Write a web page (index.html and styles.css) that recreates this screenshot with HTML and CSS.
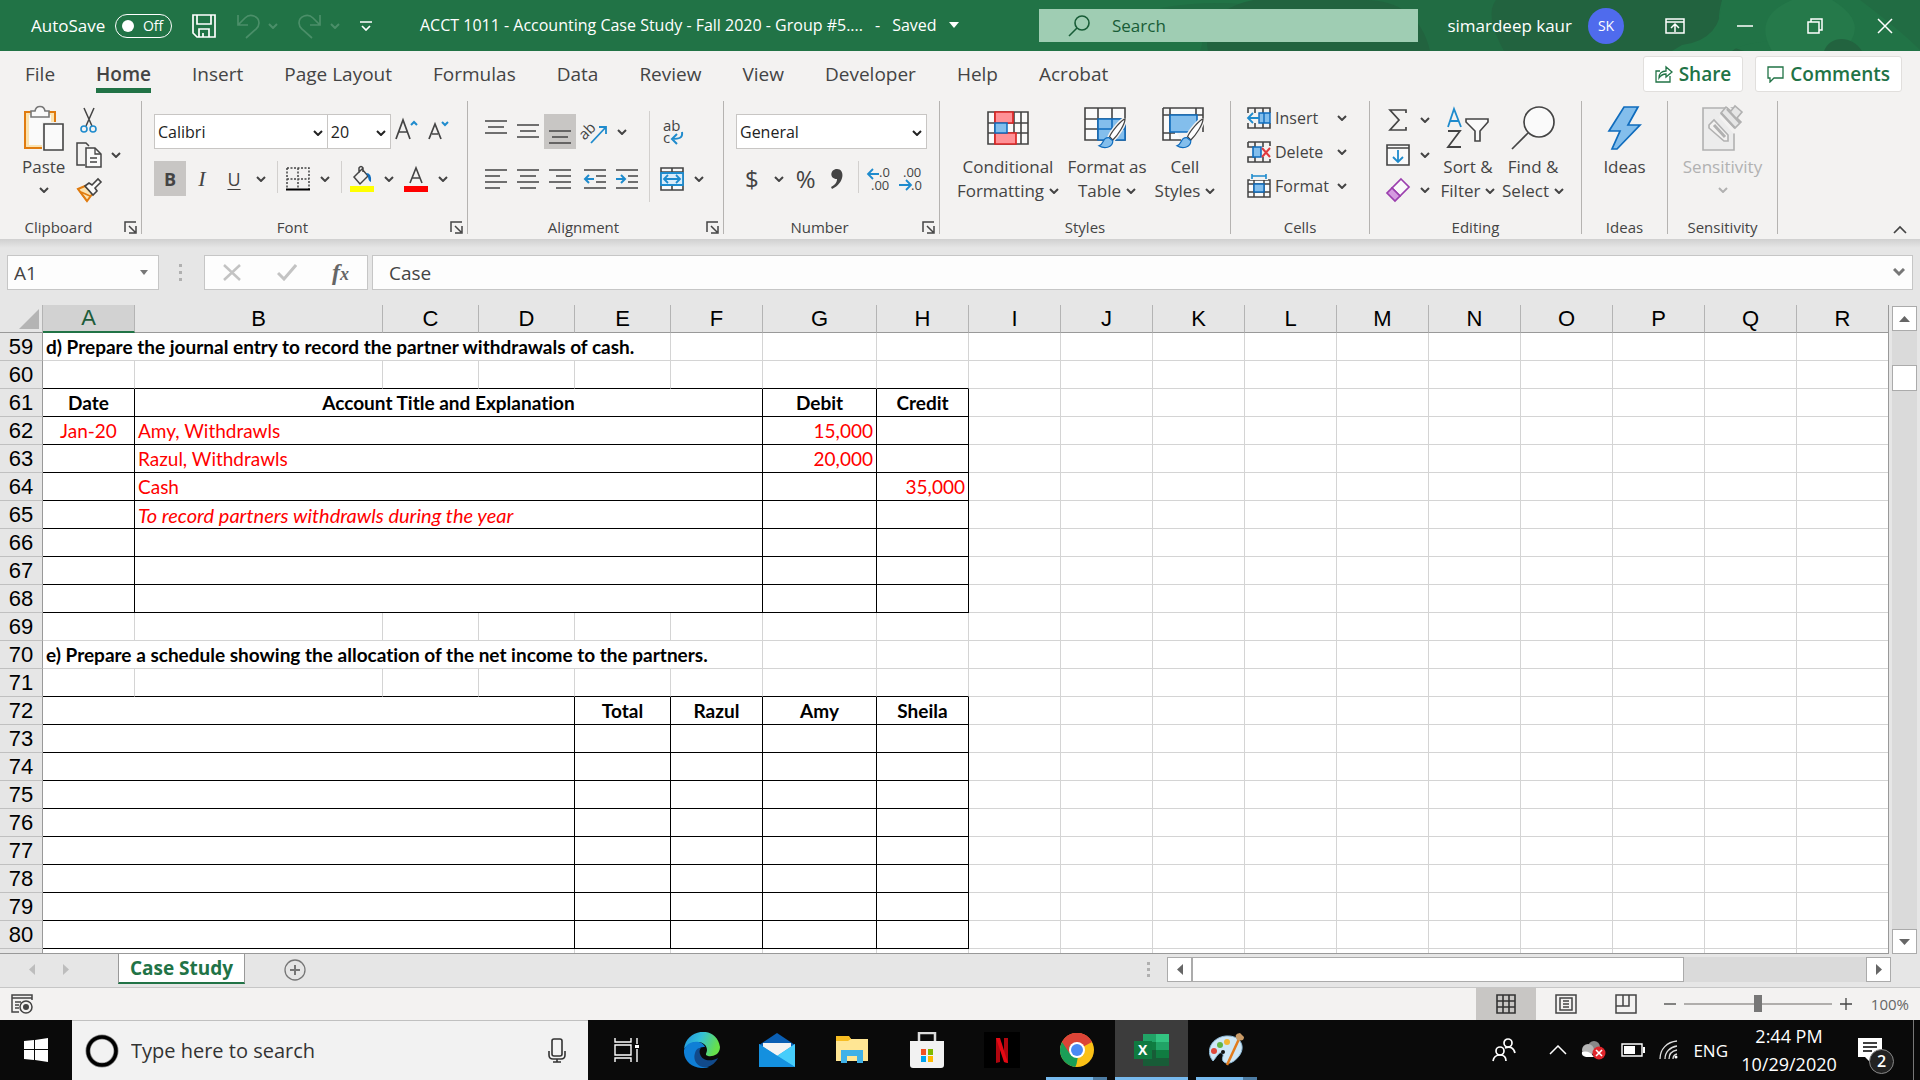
FILE: index.html
```html
<!DOCTYPE html>
<html lang="en">
<head>
  <meta charset="UTF-8" />
  <meta name="viewport" content="width=device-width, initial-scale=1" />
  <title>ACCT 1011 - Accounting Case Study - Fall 2020 - Excel</title>
  <link rel="stylesheet" href="styles.css">
</head>
<body>

<!-- Shared icons -->
<svg class="defs" width="0" height="0" aria-hidden="true">
  <symbol id="chev" viewBox="0 0 10 6"><path d="M1 1l4 4 4-4" fill="none" stroke="currentColor" stroke-width="2"/></symbol>
  <symbol id="launch" viewBox="0 0 13 13"><path d="M1 11V1h11M5 5l6 6M12 5v7H5" fill="none" stroke="currentColor" stroke-width="1.5"/></symbol>
  <symbol id="brush" viewBox="0 0 34 38">
    <path d="M33 1C29 2 17 16 14 23l4 4C24 21 33 8 33 1z" fill="#fff" stroke="#f3f2f1" stroke-width="5"/>
    <path d="M33 1C29 2 17 16 14 23l4 4C24 21 33 8 33 1z" fill="#fff" stroke="#444" stroke-width="1.5"/>
    <path d="M13 24c-8-1-5 8-12 10 6 4 17 3 17-6z" fill="#83beec" stroke="#0f6cbd" stroke-width="1.5"/>
  </symbol>
</svg>

<header class="titlebar">
  <svg class="titlebar-art" viewBox="0 0 760 51" preserveAspectRatio="xMaxYMin slice" aria-hidden="true">
    <path d="M0 8q60-10 110 0v43H40q8-20-10-40z" fill="#216c43"/>
    <path d="M48 51q-6-32 24-44q24-12 60-7h430q-12 42 22 51z" fill="#22633f"/>
    <path d="M204 0q54 0 66 51h74q-20-36-8-51z" fill="#216c43"/>
    <path d="M562 0q0 40-40 45l-10 6h60q10-8 40-10v-41z" fill="#217346"/>
    <path d="M612 51q-20-34 20-51h40q40 24 10 51z" fill="#25794a"/>
    <path d="M664 51c6-16 28-16 38 0z" fill="#22633f"/>
    <path d="M700 0h60v50q-20-20-60-50z" fill="#216c43"/>
  </svg>
  <div class="quick">
    <label class="autosave">AutoSave
      <input type="checkbox" class="sr" name="autosave">
      <span class="toggle"><i></i>Off</span>
    </label>
    <button class="quick-btn" aria-label="Save"><svg width="24" height="24" viewBox="0 0 24 24"><path d="M1 1h22v22H5l-4-4zM5 1v9h14V1M7 23v-8h10v8M11 19v4" fill="none" stroke="#fff" stroke-width="1.7"/></svg></button>
    <button class="quick-btn dim" aria-label="Undo"><svg width="24" height="26" viewBox="0 0 24 26"><path d="M2 2v10h10M2 12L9 5c5-5 14-2 14 5 0 4-2 5-4 7l-9 8" fill="none" stroke="currentColor" stroke-width="1.7"/></svg><svg width="10" height="6"><use href="#chev"/></svg></button>
    <button class="quick-btn dim" aria-label="Redo"><svg width="24" height="26" viewBox="0 0 24 26"><path d="M22 2v10H12M22 12l-7-7C10 0 1 3 1 10c0 4 2 5 4 7l9 8" fill="none" stroke="currentColor" stroke-width="1.7"/></svg><svg width="10" height="6"><use href="#chev"/></svg></button>
    <button class="quick-btn" aria-label="Customize"><svg width="12" height="10" viewBox="0 0 12 10"><path d="M0 1h12M2 5l4 4 4-4" fill="none" stroke="#fff" stroke-width="1.7"/></svg></button>
  </div>
  <div class="doc-title">
    <span>ACCT 1011 - Accounting Case Study - Fall 2020 - Group #5....</span>
    <span>-</span>
    <span>Saved</span>
    <svg width="10" height="6" viewBox="0 0 10 6"><path d="M0 0h10L5 6z" fill="#fff"/></svg>
  </div>
  <label class="search">
    <svg width="22" height="22" viewBox="0 0 22 22"><path d="M1 21l8-8" stroke="#185c37" stroke-width="1.6"/><circle cx="14" cy="8" r="7" fill="none" stroke="#185c37" stroke-width="1.6"/></svg>
    <input type="text" placeholder="Search" aria-label="Search">
  </label>
  <div class="window-side">
    <span class="user">simardeep kaur</span>
    <span class="avatar">SK</span>
    <button class="win-btn" aria-label="Ribbon display options"><svg width="20" height="16" viewBox="0 0 20 16"><path d="M1 1h18v14H1zM1 4h18M10 14V6M6 10l4-4 4 4" fill="none" stroke="#fff" stroke-width="1.5"/></svg></button>
    <button class="win-btn" aria-label="Minimize"><svg width="16" height="16" viewBox="0 0 16 16"><path d="M0 8h16" stroke="#fff" stroke-width="1.5"/></svg></button>
    <button class="win-btn" aria-label="Restore"><svg width="16" height="16" viewBox="0 0 16 16"><path d="M1 4h11v11H1zM4 4V1h11v11h-3" fill="none" stroke="#fff" stroke-width="1.5"/></svg></button>
    <button class="win-btn" aria-label="Close"><svg width="16" height="16" viewBox="0 0 16 16"><path d="M1 1l14 14M15 1L1 15" stroke="#fff" stroke-width="1.5"/></svg></button>
  </div>
</header>

<nav class="tabs">
  <a href="#">File</a>
  <a href="#" class="active">Home</a>
  <a href="#">Insert</a>
  <a href="#">Page Layout</a>
  <a href="#">Formulas</a>
  <a href="#">Data</a>
  <a href="#">Review</a>
  <a href="#">View</a>
  <a href="#">Developer</a>
  <a href="#">Help</a>
  <a href="#">Acrobat</a>
  <div class="tab-actions">
    <button><svg width="18" height="18" viewBox="0 0 18 18"><path d="M5 6H1v11h14v-6M4 13c0-5 3-7 7-7V2l6 5-6 5V9c-3 0-5 1-7 4z" fill="none" stroke="#217346" stroke-width="1.3"/></svg>Share</button>
    <button><svg width="17" height="17" viewBox="0 0 17 17"><path d="M1 1h15v11H7l-4 4v-4H1z" fill="none" stroke="#217346" stroke-width="1.3"/></svg>Comments</button>
  </div>
</nav>

<section class="ribbon">
  <div class="group g-clipboard">
    <div class="group-body">
      <button class="big"><span class="big-icon"><svg width="42" height="46" viewBox="0 0 42 46"><path d="M2 7h30v36H2z" fill="#fbe3b0" stroke="#e07c10" stroke-width="2"/><path d="M6 10h22v30H6z" fill="#fafafa"/><path d="M8 12V6h4c1-6 9-6 10 0h4v6z" fill="#fafafa" stroke="#777" stroke-width="1.6"/><path d="M19 17h22v28H19z" fill="#f3f2f1"/><path d="M21 19h19v26H21z" fill="#fafafa" stroke="#444" stroke-width="1.6"/></svg></span>Paste<svg class="below" width="10" height="6"><use href="#chev"/></svg></button>
      <div class="stack">
        <button class="tool" aria-label="Cut"><svg width="18" height="26" viewBox="0 0 18 26"><path d="M4 1l8 18M14 1L6 19" stroke="#444" stroke-width="1.5"/><circle cx="4" cy="22" r="3" fill="none" stroke="#1e8bcd" stroke-width="1.6"/><circle cx="13" cy="22" r="3" fill="none" stroke="#1e8bcd" stroke-width="1.6"/></svg></button>
        <div class="row"><button class="tool" aria-label="Copy"><svg width="26" height="26" viewBox="0 0 26 26"><path d="M9 23H1V1h9l3 3" fill="none" stroke="#444" stroke-width="1.5"/><path d="M10 6h9l6 6v13H10z" fill="#fafafa" stroke="#444" stroke-width="1.5"/><path d="M19 6v6h6M14 16h7M14 20h7" fill="none" stroke="#444" stroke-width="1.3"/></svg></button><button class="drop" aria-label="Copy options"><svg width="10" height="6"><use href="#chev"/></svg></button></div>
        <button class="tool" aria-label="Format Painter"><svg width="26" height="24" viewBox="0 0 26 24"><path d="M2 11l7-3 8 7-6 8z" fill="#fbe3b0" stroke="#e07c10" stroke-width="2"/><path d="M5 14l9 4M2 11l9 12" stroke="#e07c10" stroke-width="1.5"/><path d="M9 8l4-3 3 2 6-6 3 3-6 6 2 3-4 4z" fill="#fafafa" stroke="#444" stroke-width="1.6"/></svg></button>
      </div>
    </div>
    <div class="group-label launchable">Clipboard<button class="launch" aria-label="Clipboard settings"><svg width="13" height="13"><use href="#launch"/></svg></button></div>
  </div>

  <div class="group g-font">
    <div class="group-body tools">
      <div class="row">
        <span class="combo w-font"><select aria-label="Font"><option>Calibri</option></select><svg width="10" height="6"><use href="#chev"/></svg></span>
        <span class="combo w-size"><select aria-label="Font size"><option>20</option></select><svg width="10" height="6"><use href="#chev"/></svg></span>
        <button class="tool" aria-label="Increase font size"><svg width="24" height="26" viewBox="0 0 24 26"><path d="M1 20L8 1l7 19M4 13h8" fill="none" stroke="#444" stroke-width="1.7"/><path d="M16 6l3-3 3 3" fill="none" stroke="#1e8bcd" stroke-width="2"/></svg></button>
        <button class="tool" aria-label="Decrease font size"><svg width="22" height="26" viewBox="0 0 22 26"><path d="M1 20L7 5l6 15M4 15h6" fill="none" stroke="#444" stroke-width="1.7"/><path d="M14 3l3 3 3-3" fill="none" stroke="#1e8bcd" stroke-width="2"/></svg></button>
      </div>
      <div class="row">
        <button class="tool on bold">B</button>
        <button class="tool italic">I</button>
        <button class="tool under">U</button>
        <button class="drop" aria-label="Underline options"><svg width="10" height="6"><use href="#chev"/></svg></button>
        <i class="sep"></i>
        <button class="tool" aria-label="Borders"><svg width="24" height="24" viewBox="0 0 24 24"><path d="M1 1h22v21M1 1v21M12 1v21M1 12h22" fill="none" stroke="#444" stroke-width="1.5" stroke-dasharray="2 1.5"/><path d="M0 22.5h24" stroke="#000" stroke-width="2"/></svg></button>
        <button class="drop" aria-label="Border options"><svg width="10" height="6"><use href="#chev"/></svg></button>
        <i class="sep"></i>
        <button class="tool" aria-label="Fill color"><svg width="24" height="26" viewBox="0 0 24 26"><path d="M4 11l8-8 6 7-8 8zM9 7V2q2-3 4 0v4" fill="none" stroke="#444" stroke-width="1.5"/><path d="M16 7q6 0 5 9-3-1-3-6z" fill="#0f6cbd"/><path d="M0 20h24v6H0z" fill="#ff0"/></svg></button>
        <button class="drop" aria-label="Fill options"><svg width="10" height="6"><use href="#chev"/></svg></button>
        <button class="tool" aria-label="Font color"><svg width="24" height="26" viewBox="0 0 24 26"><path d="M6 17l6-15 6 15M8 12h8" fill="none" stroke="#444" stroke-width="1.6"/><path d="M0 20h24v6H0z" fill="#f00"/></svg></button>
        <button class="drop" aria-label="Font color options"><svg width="10" height="6"><use href="#chev"/></svg></button>
      </div>
    </div>
    <div class="group-label launchable">Font<button class="launch" aria-label="Font settings"><svg width="13" height="13"><use href="#launch"/></svg></button></div>
  </div>

  <div class="group g-align">
    <div class="group-body">
      <div class="tools">
        <div class="row">
          <button class="tool" aria-label="Top align"><svg width="22" height="24" viewBox="0 0 22 24"><path d="M0 1h22M3 7h16M0 13h22" stroke="#444" stroke-width="1.7"/></svg></button>
          <button class="tool" aria-label="Middle align"><svg width="22" height="24" viewBox="0 0 22 24"><path d="M0 5h22M3 11h16M0 17h22" stroke="#444" stroke-width="1.7"/></svg></button>
          <button class="tool on" aria-label="Bottom align"><svg width="22" height="24" viewBox="0 0 22 24"><path d="M0 11h22M3 17h16M0 23h22" stroke="#444" stroke-width="1.7"/></svg></button>
          <button class="tool second" aria-label="Orientation"><svg width="26" height="26" viewBox="0 0 26 26"><text x="-2" y="17" transform="rotate(-45 6 14)" font-size="15" fill="#444">ab</text><path d="M9 24L24 8M17 8h7v7" fill="none" stroke="#1e8bcd" stroke-width="1.8"/></svg></button>
          <button class="drop" aria-label="Orientation options"><svg width="10" height="6"><use href="#chev"/></svg></button>
        </div>
        <div class="row">
          <button class="tool" aria-label="Align left"><svg width="22" height="20" viewBox="0 0 22 20"><path d="M0 1h22M0 7h15M0 13h22M0 19h15" stroke="#444" stroke-width="1.7"/></svg></button>
          <button class="tool" aria-label="Center"><svg width="22" height="20" viewBox="0 0 22 20"><path d="M0 1h22M3 7h16M0 13h22M3 19h16" stroke="#444" stroke-width="1.7"/></svg></button>
          <button class="tool" aria-label="Align right"><svg width="22" height="20" viewBox="0 0 22 20"><path d="M0 1h22M7 7h15M0 13h22M7 19h15" stroke="#444" stroke-width="1.7"/></svg></button>
          <button class="tool second" aria-label="Decrease indent"><svg width="22" height="20" viewBox="0 0 22 20"><path d="M0 1h22M12 7h10M12 13h10M0 19h22" stroke="#444" stroke-width="1.7"/><path d="M10 10H1M5 6l-4 4 4 4" fill="none" stroke="#1e8bcd" stroke-width="2"/></svg></button>
          <button class="tool" aria-label="Increase indent"><svg width="22" height="20" viewBox="0 0 22 20"><path d="M0 1h22M12 7h10M12 13h10M0 19h22" stroke="#444" stroke-width="1.7"/><path d="M0 10h9M5 6l4 4-4 4" fill="none" stroke="#1e8bcd" stroke-width="2"/></svg></button>
        </div>
      </div>
      <i class="sep tall"></i>
      <div class="tools">
        <button class="tool" aria-label="Wrap text"><svg width="24" height="26" viewBox="0 0 24 26"><text x="3" y="12" font-size="15" fill="#444">ab</text><text x="3" y="24" font-size="15" fill="#444">c</text><path d="M22 13c1 6-3 7-10 7M17 15l-5 5 5 5" fill="none" stroke="#1e8bcd" stroke-width="2"/></svg></button>
        <div class="row">
          <button class="tool" aria-label="Merge and center"><svg width="24" height="24" viewBox="0 0 24 24"><path d="M1 1h22v22H1zM12 1v22M1 5h22" fill="#fafafa" stroke="#444" stroke-width="1.6"/><path d="M1 6h22v12H1z" fill="#d9ecfa" stroke="#1e8bcd" stroke-width="1.8"/><path d="M4 12h16M8 8l-4 4 4 4M16 8l4 4-4 4" fill="none" stroke="#1e8bcd" stroke-width="1.8"/></svg></button>
          <button class="drop" aria-label="Merge options"><svg width="10" height="6"><use href="#chev"/></svg></button>
        </div>
      </div>
    </div>
    <div class="group-label launchable">Alignment<button class="launch" aria-label="Alignment settings"><svg width="13" height="13"><use href="#launch"/></svg></button></div>
  </div>

  <div class="group g-number">
    <div class="group-body tools">
      <div class="row">
        <span class="combo w-format"><select aria-label="Number format"><option>General</option></select><svg width="10" height="6"><use href="#chev"/></svg></span>
      </div>
      <div class="row">
        <button class="tool glyph">$</button>
        <button class="drop" aria-label="Currency options"><svg width="10" height="6"><use href="#chev"/></svg></button>
        <button class="tool glyph">%</button>
        <button class="tool" aria-label="Comma style"><svg width="12" height="20" viewBox="0 0 12 20"><path d="M6 0c8 0 8 14-5 20l-1-2c5-3 6-5 6-8C-2 10-1 0 6 0z" fill="#444"/></svg></button>
        <i class="sep"></i>
        <button class="tool" aria-label="Increase decimal"><svg width="24" height="24" viewBox="0 0 24 24"><text x="12" y="10" font-size="13" fill="#444">.0</text><text x="4" y="23" font-size="13" fill="#444">.00</text><path d="M12 7H1M6 2L1 7l5 5" fill="none" stroke="#1e8bcd" stroke-width="1.8"/></svg></button>
        <button class="tool" aria-label="Decrease decimal"><svg width="24" height="24" viewBox="0 0 24 24"><text x="4" y="10" font-size="13" fill="#444">.00</text><text x="12" y="23" font-size="13" fill="#444">.0</text><path d="M0 18h12M7 13l5 5-5 5" fill="none" stroke="#1e8bcd" stroke-width="1.8"/></svg></button>
      </div>
    </div>
    <div class="group-label launchable">Number<button class="launch" aria-label="Number settings"><svg width="13" height="13"><use href="#launch"/></svg></button></div>
  </div>

  <div class="group g-styles">
    <div class="group-body">
      <button class="big w-cond"><span class="big-icon"><svg width="42" height="34" viewBox="0 0 42 34"><path d="M1 1h40v32H1zM1 12h40M1 22h40M8 1v32M34 1v32M27 1v32" fill="#fafafa" stroke="#444" stroke-width="1.6"/><path d="M8 1h18v11H8zM8 22h21v11H8z" fill="#ff9196" stroke="#dc2626" stroke-width="1.7"/><path d="M8 12h12v10H8z" fill="#83beec" stroke="#0f6cbd" stroke-width="1.5"/></svg></span>Conditional<span class="line">Formatting <svg width="10" height="6"><use href="#chev"/></svg></span></button>
      <button class="big w-table"><span class="big-icon"><svg width="46" height="42" viewBox="0 0 46 42"><path d="M1 1h40v32H1zM1 12h40M1 22h40M14 1v32M28 1v32" fill="#fafafa" stroke="#444" stroke-width="1.6"/><path d="M14 12h27v21H14zM14 22h27M28 12v21" fill="#83beec" stroke="#0f6cbd" stroke-width="1.6"/><use href="#brush" x="11" y="11" width="34" height="31"/></svg></span>Format as<span class="line">Table <svg width="10" height="6"><use href="#chev"/></svg></span></button>
      <button class="big w-cell"><span class="big-icon"><svg width="46" height="42" viewBox="0 0 46 42"><path d="M1 1h40v24M1 1v32h18M1 8h40M8 1v32M34 1v7M1 26h12" fill="#fafafa" stroke="#444" stroke-width="1.6"/><path d="M8 8h27v17H8z" fill="#83beec" stroke="#0f6cbd" stroke-width="1.6"/><use href="#brush" x="11" y="11" width="34" height="31"/></svg></span>Cell<span class="line">Styles <svg width="10" height="6"><use href="#chev"/></svg></span></button>
    </div>
    <div class="group-label">Styles</div>
  </div>

  <div class="group g-cells">
    <div class="group-body stack">
      <button class="text-tool"><svg width="24" height="22" viewBox="0 0 24 22"><path d="M1 6V1h22v5M1 16v5h22v-5M8 1v5M16 1v5M8 16v5M16 16v5" fill="none" stroke="#444" stroke-width="1.6"/><path d="M12 6h11v10H12zM17 6v10" fill="#83beec" stroke="#0f6cbd" stroke-width="1.4"/><path d="M12 11H1M6 6l-5 5 5 5" fill="none" stroke="#1e8bcd" stroke-width="1.8"/></svg>Insert<svg class="end" width="10" height="6"><use href="#chev"/></svg></button>
      <button class="text-tool"><svg width="24" height="22" viewBox="0 0 24 22"><path d="M1 1h22v4M1 1v5h6v10H1v5h22v-3M8 1v5M16 1v5M8 16v5M16 16v5" fill="none" stroke="#444" stroke-width="1.6"/><path d="M6 6h8v10H6z" fill="#83beec" stroke="#0f6cbd" stroke-width="1.6"/><path d="M15 7l8 9M23 7l-8 9" stroke="#e03a3e" stroke-width="2"/></svg>Delete<svg class="end" width="10" height="6"><use href="#chev"/></svg></button>
      <button class="text-tool"><svg width="24" height="24" viewBox="0 0 24 24"><path d="M1 6h22v17H1zM1 10h22M1 18h22M7 6v17M17 6v17" fill="#fafafa" stroke="#444" stroke-width="1.5"/><path d="M7 10h10v8H7z" fill="#83beec" stroke="#0f6cbd" stroke-width="1.5"/><path d="M3 0h18v6H3z" fill="#f3f2f1"/><path d="M5 0v5M19 0v5M5 2h14" stroke="#1e8bcd" stroke-width="1.6"/></svg>Format<svg class="end" width="10" height="6"><use href="#chev"/></svg></button>
    </div>
    <div class="group-label">Cells</div>
  </div>

  <div class="group g-editing">
    <div class="group-body">
      <div class="stack">
        <div class="row"><button class="tool" aria-label="Sum"><svg width="20" height="22" viewBox="0 0 20 22"><path d="M18 4V1H2l9 10L2 21h16v-3" fill="none" stroke="#444" stroke-width="1.7"/></svg></button><button class="drop" aria-label="Sum options"><svg width="10" height="6"><use href="#chev"/></svg></button></div>
        <div class="row"><button class="tool" aria-label="Fill"><svg width="24" height="22" viewBox="0 0 24 22"><path d="M1 1h22v20H1zM1 4h22" fill="#fafafa" stroke="#444" stroke-width="1.6"/><path d="M12 6v12M7 13l5 5 5-5" fill="none" stroke="#1e8bcd" stroke-width="1.8"/></svg></button><button class="drop" aria-label="Fill options"><svg width="10" height="6"><use href="#chev"/></svg></button></div>
        <div class="row"><button class="tool" aria-label="Clear"><svg width="24" height="24" viewBox="0 0 24 24"><path d="M15 1l8 8-9 9-8-8z" fill="#fafafa" stroke="#9b3fae" stroke-width="1.7"/><path d="M6 10l8 8-5 5-8-8z" fill="#d59be0" stroke="#9b3fae" stroke-width="1.7"/></svg></button><button class="drop" aria-label="Clear options"><svg width="10" height="6"><use href="#chev"/></svg></button></div>
      </div>
      <button class="big w-sort"><span class="big-icon"><svg width="42" height="42" viewBox="0 0 42 42"><path d="M1 20L7 2l7 18M3 14h9" fill="none" stroke="#1e8bcd" stroke-width="1.8"/><path d="M1 24h12L1 40h13" fill="none" stroke="#444" stroke-width="1.8"/><path d="M19 12h22v3l-8 9v10h-5V24l-9-9z" fill="#fafafa" stroke="#444" stroke-width="1.6"/></svg></span>Sort &amp;<span class="line">Filter <svg width="10" height="6"><use href="#chev"/></svg></span></button>
      <button class="big w-find"><span class="big-icon"><svg width="46" height="46" viewBox="0 0 46 46"><circle cx="29" cy="17" r="15" fill="#fafafa" stroke="#444" stroke-width="1.7"/><path d="M18 28L2 44" stroke="#444" stroke-width="1.7"/></svg></span>Find &amp;<span class="line">Select <svg width="10" height="6"><use href="#chev"/></svg></span></button>
    </div>
    <div class="group-label">Editing</div>
  </div>

  <div class="group g-ideas">
    <div class="group-body">
      <button class="big"><span class="big-icon"><svg width="34" height="44" viewBox="0 0 34 44"><path d="M16 1h14l-10 18h12L9 43H4l8-18H1z" fill="#83beec" stroke="#0f6cbd" stroke-width="1.7"/></svg></span>Ideas</button>
    </div>
    <div class="group-label">Ideas</div>
  </div>

  <div class="group g-sens">
    <div class="group-body">
      <button class="big" disabled><span class="big-icon"><svg width="42" height="46" viewBox="0 0 42 46"><path d="M1 3h31v42H1z" fill="#ececec" stroke="#b1b1b1" stroke-width="1.6"/><path d="M17 12l10-11 16 15-11 13z" fill="#f3f2f1"/><path d="M7 20l5-5 14 15v6h-4L7 23z" fill="#f3f2f1" stroke="#b1b1b1" stroke-width="1.6"/><path d="M12 20l11 12" stroke="#b1b1b1" stroke-width="3"/><path d="M19 8l5-6 5 4 4-5 7 6-5 6 4 4-6 6z" fill="#e6e6e6" stroke="#b1b1b1" stroke-width="1.6"/><path d="M19 8l14 15M25 4l13 14" stroke="#b1b1b1" stroke-width="2.5"/></svg></span>Sensitivity<svg class="below" width="10" height="6"><use href="#chev"/></svg></button>
    </div>
    <div class="group-label">Sensitivity</div>
  </div>

  <button class="collapse" aria-label="Collapse the ribbon"><svg width="14" height="9" viewBox="0 0 14 9"><path d="M1 8l6-6 6 6" fill="none" stroke="#444" stroke-width="1.7"/></svg></button>
</section>

<section class="formula-row">
  <div class="name-box"><input type="text" value="A1" aria-label="Name box"><svg width="8" height="5" viewBox="0 0 8 5"><path d="M0 0h8L4 5z" fill="#777"/></svg></div>
  <svg class="dots" width="3" height="17" viewBox="0 0 3 17"><path d="M0 0h3v3H0zM0 7h3v3H0zM0 14h3v3H0z" fill="#b0b0b0"/></svg>
  <div class="fx-box">
    <button aria-label="Cancel"><svg width="18" height="17" viewBox="0 0 18 17"><path d="M1 1l16 15M17 1L1 16" stroke="#c3c3c3" stroke-width="2.5"/></svg></button>
    <button aria-label="Enter"><svg width="20" height="17" viewBox="0 0 20 17"><path d="M1 9l6 6L19 1" fill="none" stroke="#c3c3c3" stroke-width="3"/></svg></button>
    <button class="fx">f<small>x</small></button>
  </div>
  <div class="formula"><input type="text" value="Case" aria-label="Formula bar"><svg width="12" height="9" viewBox="0 0 12 9"><path d="M1 1l5 5 5-5" fill="none" stroke="#777" stroke-width="3"/></svg></div>
</section>

<main class="sheet-area">
  <div class="sheet-view">
    <table class="sheet" id="sheet">
      <colgroup>
        <col class="c-head"><col><col class="c-b"><col class="c-c"><col class="c-c"><col class="c-c"><col><col class="c-g"><col>
        <col><col><col><col><col><col><col><col><col><col>
      </colgroup>
      <thead></thead>
      <tbody></tbody>
    </table>
  </div>
  <div class="vscroll">
    <button aria-label="Scroll up"><svg width="11" height="6" viewBox="0 0 11 6"><path d="M0 6h11L5.500 0z" fill="#666"/></svg></button>
    <div class="vtrack"><div class="vthumb"></div></div>
    <button aria-label="Scroll down"><svg width="11" height="6" viewBox="0 0 11 6"><path d="M0 0h11L5.500 6z" fill="#666"/></svg></button>
  </div>
</main>

<section class="sheet-bar">
  <div class="sheet-nav">
    <button aria-label="Previous sheet"><svg width="6" height="11" viewBox="0 0 6 11"><path d="M6 0v11L0 5.500z" fill="#bdbdbd"/></svg></button>
    <button aria-label="Next sheet"><svg width="6" height="11" viewBox="0 0 6 11"><path d="M0 0v11l6-5.500z" fill="#bdbdbd"/></svg></button>
  </div>
  <button class="sheet-tab">Case Study</button>
  <button class="add" aria-label="New sheet"><svg width="22" height="22" viewBox="0 0 22 22"><path d="M11 6v10M6 11h10" stroke="#777" stroke-width="2"/><circle cx="11" cy="11" r="10" fill="none" stroke="#777" stroke-width="1.3"/></svg></button>
  <svg class="dots" width="3" height="15" viewBox="0 0 3 15"><path d="M0 0h3v3H0zM0 6h3v3H0zM0 12h3v3H0z" fill="#b0b0b0"/></svg>
  <div class="hscroll">
    <button aria-label="Scroll left"><svg width="6" height="11" viewBox="0 0 6 11"><path d="M6 0v11L0 5.500z" fill="#666"/></svg></button>
    <div class="htrack"><div class="hthumb"></div></div>
    <button aria-label="Scroll right"><svg width="6" height="11" viewBox="0 0 6 11"><path d="M0 0v11l6-5.500z" fill="#666"/></svg></button>
  </div>
</section>

<section class="status">
  <button class="macro" aria-label="Record macro"><svg width="22" height="20" viewBox="0 0 22 20"><path d="M21 6V1H1v17h7M1 4h20M4 8h6M4 11h4M4 14h4" fill="none" stroke="#444" stroke-width="1.5"/><circle cx="15" cy="13" r="6" fill="#f3f2f1" stroke="#444" stroke-width="1.5"/><circle cx="15" cy="13" r="3" fill="#444"/></svg></button>
  <div class="views">
    <button class="on" aria-label="Normal view"><svg width="20" height="20" viewBox="0 0 20 20"><path d="M1 1h18v18H1zM1 7h18M1 13h18M7 1v18M13 1v18" fill="none" stroke="#333" stroke-width="1.6"/></svg></button>
    <button aria-label="Page layout view"><svg width="22" height="20" viewBox="0 0 22 20"><path d="M1 1h20v18H1zM5 4h12v12H5zM8 7h6M8 10h6M8 13h6" fill="none" stroke="#444" stroke-width="1.5"/></svg></button>
    <button aria-label="Page break view"><svg width="22" height="20" viewBox="0 0 22 20"><path d="M1 1h20v18H1zM1 12h13V1M8 1v11" fill="none" stroke="#444" stroke-width="1.5"/></svg></button>
  </div>
  <button class="zoom-step" aria-label="Zoom out"><svg width="12" height="12" viewBox="0 0 12 12"><path d="M0 6h12" stroke="#444" stroke-width="1.3"/></svg></button>
  <input type="range" min="0" max="100" value="50" aria-label="Zoom">
  <button class="zoom-step" aria-label="Zoom in"><svg width="12" height="12" viewBox="0 0 12 12"><path d="M0 6h12M6 0v12" stroke="#444" stroke-width="1.3"/></svg></button>
  <span class="zoom-val">100%</span>
</section>

<footer class="taskbar">
  <button class="start" aria-label="Start"><svg width="24" height="24" viewBox="0 0 24 24"><path d="M0 3l10-1v9H0zM11 2l13-2v11H11zM0 12h10v10L0 21zM11 12h13v12l-13-2z" fill="#fff"/></svg></button>
  <label class="task-search">
    <svg width="34" height="34" viewBox="0 0 34 34"><circle cx="17" cy="17" r="14" fill="none" stroke="#888" stroke-width="5"/><circle cx="17" cy="17" r="14" fill="none" stroke="#000" stroke-width="3.5"/></svg>
    <input type="text" placeholder="Type here to search" aria-label="Type here to search">
    <svg width="18" height="25" viewBox="0 0 18 25"><rect x="4" y="1" width="10" height="17" rx="2" fill="none" stroke="#333" stroke-width="1.6"/><path d="M1 13v4q0 4 4 4h8q4 0 4-4v-4M9 21v3M5 24h8" fill="none" stroke="#333" stroke-width="1.6"/></svg>
  </label>
  <div class="apps">
    <button aria-label="Task View"><svg width="26" height="24" viewBox="0 0 26 24"><path d="M1 0v4h16V0M1 24v-4h16v4M1 7h16v10H1zM23 0v6M23 11v13" fill="none" stroke="#fff" stroke-width="1.4"/><path d="M21 7h4v3h-4z" fill="#fff"/></svg></button>
    <button aria-label="Edge"><svg width="36" height="36" viewBox="0 0 36 36"><defs><linearGradient id="edgeA" x1="0" y1="0" x2="1" y2="0.3"><stop offset="0" stop-color="#1d8fe0"/><stop offset="0.5" stop-color="#35c1d6"/><stop offset="1" stop-color="#66e04a"/></linearGradient></defs><path d="M0 17C2-4 33-7 36 15c0 8-8 10-12 9-4-1-1-3-1-6 0-9-14-12-23-1z" fill="url(#edgeA)"/><path d="M0 18C3 8 18 7 21 15c-7-1-9 5-7 11 2 5 6 8 11 9C12 39-1 31 0 18z" fill="#0f7fd6"/><path d="M11 21c-3 9 5 16 12 14 5-1 9-5 11-9-7 4-16 3-18-4-1-3 0-5 1-6-4 0-5 2-6 5z" fill="#114a8b"/></svg></button>
    <button aria-label="Mail"><svg width="36" height="34" viewBox="0 0 36 34"><path d="M0 12L18 0l18 12v10H0z" fill="#0a5fb4"/><path d="M4 10h28v10L18 26 4 20z" fill="#f3f3f3"/><path d="M0 11l18 12 18-12v23H0z" fill="#1f9fe8"/><path d="M36 11v23L18 23z" fill="#46cdfb"/><path d="M0 11l36 23H0z" fill="#1490df"/></svg></button>
    <button aria-label="File Explorer"><svg width="32" height="28" viewBox="0 0 32 28"><path d="M0 1h13l2 2h17v22H0z" fill="#ffe694"/><path d="M0 0h13l2 3-3 2H0z" fill="#f7bd22"/><path d="M5 27V14h22v13h-6v-7H11v7z" fill="#3fb1e8"/></svg></button>
    <button aria-label="Store"><svg width="34" height="36" viewBox="0 0 34 36"><path d="M9 12V1h16v11" fill="none" stroke="#ddd" stroke-width="2.500"/><path d="M0 9h34v24q0 3-3 3H3q-3 0-3-3z" fill="#f2f2f2"/><path d="M11 17h5v6h-5z" fill="#f25022"/><path d="M18 17h5v6h-5z" fill="#7fba00"/><path d="M11 24h5v6h-5z" fill="#00a4ef"/><path d="M18 24h5v6h-5z" fill="#ffb900"/></svg></button>
    <button aria-label="Netflix"><svg width="36" height="36" viewBox="0 0 36 36"><path d="M0 0h36v36H0z" fill="#000"/><path d="M12 6h4v24l-4 1zM20 6h4v25l-4-1z" fill="#b1060f"/><path d="M12 6h4l8 25-4-1z" fill="#e50914"/></svg></button>
    <button class="open" aria-label="Chrome"><svg width="34" height="34" viewBox="0 0 34 34"><circle cx="17" cy="17" r="17" fill="#fbc116"/><path d="M17 17L2 9A17 17 0 0 1 32 9z" fill="#dc4437"/><path d="M17 17L15 34A17 17 0 0 1 2 9z" fill="#1a9e57"/><path d="M15 34l9-13-8-4-4 6z" fill="#1a9e57"/><path d="M16 34l9-14-6-2z" fill="#fbc116"/><path d="M2 9l8 12-1-8 8-4h15A17 17 0 0 0 2 9z" fill="#dc4437"/><circle cx="17" cy="17" r="8" fill="#fff"/><circle cx="17" cy="17" r="6" fill="#4a8af4"/></svg></button>
    <button class="open current" aria-label="Excel"><svg width="36" height="34" viewBox="0 0 36 34"><path d="M9 1h14v9H9z" fill="#21a366"/><path d="M22 1h13v9H22z" fill="#33c481"/><path d="M9 9h13v8H9z" fill="#107c41"/><path d="M22 9h13v8H22z" fill="#21a366"/><path d="M9 17h26v16H9z" fill="#185c37"/><path d="M22 17h13v8H22z" fill="#107c41"/><path d="M0 8h18v18H0z" fill="#0f7a40"/><text x="4" y="22" font-size="14" font-weight="700" fill="#fff">X</text></svg></button>
    <button class="open" aria-label="Paint"><svg width="36" height="34" viewBox="0 0 36 34"><path d="M17 3C32 2 37 14 30 23c-6 8-13 9-16 5-2-4 2-5-1-8-3-2-6 5-9 8C-5 17 4 4 17 3z" fill="#cfe7f7" stroke="#8ebbd8" stroke-width="1"/><circle cx="5" cy="18" r="3" fill="#e0483a"/><circle cx="11" cy="12" r="3" fill="#62b545"/><circle cx="18" cy="9" r="3" fill="#f2b632"/><circle cx="14" cy="19" r="2" fill="#111"/><path d="M30 6L18 32" stroke="#e27b1d" stroke-width="2.5"/><path d="M28 7q-4-6 3-7l4 4q0 5-7 3z" fill="#c99a66"/></svg></button>
  </div>
  <div class="tray">
    <button class="people" aria-label="People"><svg width="24" height="24" viewBox="0 0 24 24"><circle cx="8" cy="13" r="4" fill="none" stroke="#fff" stroke-width="1.7"/><circle cx="16" cy="5" r="4" fill="none" stroke="#fff" stroke-width="1.7"/><path d="M1 23q1-6 7-6t6 6M13 10q8-3 10 5" fill="none" stroke="#fff" stroke-width="1.7"/></svg></button>
    <button aria-label="Hidden icons"><svg width="18" height="10" viewBox="0 0 18 10"><path d="M1 9l8-8 8 8" fill="none" stroke="#fff" stroke-width="1.5"/></svg></button>
    <button aria-label="OneDrive"><svg width="26" height="20" viewBox="0 0 26 20"><circle cx="13" cy="7" r="6" fill="#888"/><circle cx="7" cy="10" r="6" fill="#b5b5b5"/><path d="M1 12q7-2 12 5H5q-5-1-4-5z" fill="#fff"/><circle cx="18" cy="13" r="6.500" fill="#e0252b"/><path d="M15 10l6 6M21 10l-6 6" stroke="#fff" stroke-width="1.6"/></svg></button>
    <button aria-label="Battery"><svg width="24" height="14" viewBox="0 0 24 14"><path d="M1 1h20v12H1z" fill="none" stroke="#fff" stroke-width="1.4"/><path d="M3 3h11v8H3zM22 4h2v6h-2z" fill="#fff"/></svg></button>
    <button aria-label="Wi-Fi"><svg width="20" height="20" viewBox="0 0 20 20"><path d="M1 19C1 9 8 2 18 1M6 19c0-7 5-12 12-13M10 19c0-5 3-8 8-9M14 19q0-4 4-5" fill="none" stroke="#ddd" stroke-width="1.3"/><circle cx="17" cy="17" r="1.500" fill="#fff"/></svg></button>
    <span class="lang">ENG</span>
    <div class="clock"><span>2:44 PM</span><span>10/29/2020</span></div>
    <button class="notif" aria-label="Notifications"><svg width="24" height="24" viewBox="0 0 24 24"><path d="M0 0h24v19H12v5l-5-5H0z" fill="#fff"/><path d="M5 5h14M5 9h14M5 13h9" stroke="#000" stroke-width="1.3"/></svg><span class="badge">2</span></button>
    <i class="desktop-edge"></i>
  </div>
</footer>

<script src="script.js"></script>
</body>
</html>
```
FILE: styles.css
```css
* {
  box-sizing: border-box;
}

body {
  margin: 0;
  height: 100vh;
  display: flex;
  flex-direction: column;
  overflow: hidden;
  background: #e6e6e6;
  color: #444;
  font-family: "Open Sans", "Noto Sans", sans-serif;
  font-size: 16px;
}

button {
  border: 0;
  padding: 0;
  background: none;
  color: inherit;
  font: inherit;
}

input, select {
  border: 0;
  padding: 0;
  background: none;
  font: inherit;
  color: inherit;
  outline: none;
  min-width: 0;
}

svg {
  display: block;
  flex: none;
}

.defs {
  position: absolute;
}

.sr {
  position: absolute;
  opacity: 0;
}

/* Title bar */
.titlebar {
  position: relative;
  display: grid;
  grid-template-columns: 420fr 619fr 379fr 502fr;
  align-items: center;
  height: 51px;
  flex: none;
  background: #217346;
  color: #fff;
}

.titlebar-art {
  position: absolute;
  right: 0;
  top: 0;
  width: 760px;
  height: 51px;
}

.quick {
  display: flex;
  align-items: center;
  gap: 20px;
  padding-left: 31px;
}

.autosave {
  display: flex;
  align-items: center;
  gap: 10px;
  font-size: 17px;
}

.toggle {
  display: flex;
  align-items: center;
  justify-content: space-between;
  width: 57px;
  height: 24px;
  padding: 0 8px 0 6px;
  border: 1px solid #fff;
  border-radius: 12px;
  font-size: 14px;
}

.toggle i {
  width: 12px;
  height: 12px;
  border-radius: 50%;
  background: #fff;
}

.quick-btn {
  display: flex;
  align-items: center;
  gap: 8px;
}

.quick-btn.dim {
  color: #4b8f69;
}

.doc-title {
  display: flex;
  align-items: center;
  gap: 12px;
  padding-bottom: 2px;
  white-space: nowrap;
}

.search {
  position: relative;
  display: flex;
  align-items: center;
  gap: 22px;
  height: 33px;
  padding-left: 29px;
  background: #9fcdb3;
  color: #185c37;
  font-size: 17px;
}

.search input::placeholder {
  color: #185c37;
  opacity: 1;
}

.window-side {
  position: relative;
  display: flex;
  align-items: center;
  justify-content: flex-end;
}

.user {
  font-size: 17px;
}

.avatar {
  width: 36px;
  height: 36px;
  margin: 0 16px;
  border-radius: 50%;
  background: #4f6bed;
  font-size: 14px;
  line-height: 36px;
  text-align: center;
}

.win-btn {
  display: flex;
  justify-content: center;
  width: 70px;
}

/* Tabs */
.tabs {
  display: flex;
  align-items: center;
  gap: 41px;
  height: 46px;
  flex: none;
  padding: 0 18px 0 25px;
  background: #f3f2f1;
  font-size: 19px;
}

.tabs a {
  color: #444;
  text-decoration: none;
  line-height: 28px;
  border-bottom: 5px solid transparent;
  border-top: 5px solid transparent;
}

.tabs a.active {
  border-bottom-color: #217346;
  font-weight: 600;
}

.tab-actions {
  display: flex;
  gap: 12px;
  margin-left: auto;
}

.tab-actions button {
  display: flex;
  align-items: center;
  gap: 6px;
  height: 36px;
  padding: 0 11px;
  background: #fff;
  border: 1px solid #e1dfdd;
  border-radius: 3px;
  color: #217346;
  font-weight: 600;
}

/* Ribbon */
.ribbon {
  display: flex;
  height: 142px;
  flex: none;
  padding: 4px 0 5px;
  background: #f3f2f1;
}

.ribbon text {
  font-family: "Open Sans", "Noto Sans", sans-serif;
}

.ribbon svg {
  overflow: visible;
}

.group {
  display: flex;
  flex-direction: column;
  flex: none;
  border-right: 1px solid #b5b3b1;
}

.g-clipboard { width: 142px; }
.g-font { width: 326px; }
.g-align { width: 256px; }
.g-number { width: 216px; }
.g-styles { width: 291px; }
.g-cells { width: 139px; }
.g-editing { width: 212px; }
.g-ideas { width: 86px; }
.g-sens { width: 110px; }

.group-body {
  display: flex;
  flex: 1;
  padding: 0 12px;
}

.group-label {
  position: relative;
  height: 16px;
  font-size: 15px;
  line-height: 18px;
  text-align: center;
}

.launchable {
  padding-right: 24px;
}

.launch {
  position: absolute;
  right: 4px;
  top: 3px;
}

.tools {
  display: flex;
  flex-direction: column;
  gap: 12px;
  padding-top: 13px;
}

.row {
  display: flex;
}

.tool, .drop {
  display: flex;
  align-items: center;
  justify-content: center;
  width: 32px;
  height: 35px;
}

.drop {
  width: 22px;
}

.tool.on {
  background: #c8c6c4;
}

.tool.second {
  margin-left: 3px;
}

.bold {
  font-weight: 700;
  font-size: 18px;
}

.italic {
  font-family: "Liberation Serif", serif;
  font-style: italic;
  font-size: 22px;
}

.under {
  font-size: 18px;
  text-decoration: underline;
  text-underline-offset: 3px;
}

.glyph {
  font-size: 24px;
}

.sep {
  width: 1px;
  height: 32px;
  margin: 0 4px 0 5px;
  background: #d2d0ce;
}

.sep.tall {
  height: 91px;
  margin: 10px 6px 0;
}

.combo {
  position: relative;
  display: flex;
  height: 35px;
  background: #fff;
  border: 1px solid #c8c6c4;
  color: #222;
}

.combo + .combo {
  border-left: 0;
}

.combo select {
  width: 100%;
  padding-left: 3px;
  appearance: none;
}

.combo svg {
  position: absolute;
  right: 4px;
  top: 15px;
  pointer-events: none;
}

.w-font { width: 175px; }
.w-size { width: 64px; }
.w-format { width: 192px; }

.stack {
  display: flex;
  flex-direction: column;
  padding-top: 1px;
}

.big {
  display: flex;
  flex-direction: column;
  align-items: center;
  line-height: 24px;
  padding-top: 4px;
  flex: none;
  font-size: 17px;
  white-space: nowrap;
}

.big:disabled {
  color: #b1b1b1;
}

.big-icon {
  display: flex;
  align-items: center;
  height: 46px;
  margin-bottom: 4px;
}

.big .line {
  display: flex;
  align-items: center;
  gap: 5px;
}

.big .below {
  margin-top: 8px;
}

.w-cond { width: 112px; }
.w-table { width: 86px; }
.w-cell { width: 70px; }
.w-sort { width: 64px; }
.w-find { width: 66px; }

.g-clipboard .group-body {
  padding: 0 0 0 22px;
  gap: 8px;
}

.g-styles .group-body {
  padding-left: 12px;
}

.g-ideas .group-body, .g-sens .group-body {
  justify-content: center;
  padding: 0;
}

.g-editing .group-body {
  padding: 0 0 0 12px;
}

.text-tool {
  display: flex;
  align-items: center;
  gap: 4px;
  height: 34px;
}

.text-tool .end {
  margin-left: auto;
}

.g-cells .stack {
  padding-top: 0;
}

.g-cells .text-tool {
  width: 100px;
  margin-left: 4px;
}

.collapse {
  align-self: flex-end;
  margin: 0 13px 0 auto;
}

/* Formula bar */
.formula-row {
  display: flex;
  align-items: flex-start;
  height: 66px;
  flex: none;
  padding: 16px 7px 0;
  background: linear-gradient(#d0d0d0, #e6e6e6 9px);
  font-size: 19px;
}

.name-box, .fx-box, .formula {
  display: flex;
  align-items: center;
  height: 35px;
  background: #fdfdfd;
  border: 1px solid #c6c6c6;
}

.name-box {
  width: 152px;
  padding: 0 10px 0 6px;
}

.name-box input, .formula input {
  flex: 1;
}

.formula-row .dots {
  margin: 9px 22px 0 20px;
}

.fx-box {
  width: 164px;
  justify-content: space-between;
  padding: 0 18px;
}

.fx {
  font-family: "Liberation Serif", serif;
  font-style: italic;
  font-weight: 700;
  font-size: 24px;
  line-height: 30px;
  color: #666;
}

.fx small {
  font-size: 18px;
}

.formula {
  flex: 1;
  margin-left: 4px;
  padding: 0 7px 0 16px;
}

/* Sheet */
.sheet-area {
  display: flex;
  flex: 1;
  min-height: 0;
}

.sheet-view {
  flex: 1;
  overflow: hidden;
  border-right: 1px solid #999;
  border-bottom: 1px solid #999;
  background: #fff;
}

.sheet {
  table-layout: fixed;
  width: 1889px;
  border-collapse: separate;
  border-spacing: 0;
  color: #000;
  font-family: Lato, sans-serif;
  font-size: 19px;
  font-variant-ligatures: none;
}

.sheet col { width: 92px; }
.sheet .c-head { width: 43px; }
.sheet .c-b { width: 248px; }
.sheet .c-c { width: 96px; }
.sheet .c-g { width: 114px; }

.sheet th {
  height: 28px;
  padding: 0;
  background: #e6e6e6;
  border-right: 1px solid #b4b4b4;
  border-bottom: 1px solid #999;
  font: 22px/24px "Liberation Sans", Arial, sans-serif;
}

.sheet tbody th {
  border-right-color: #999;
  border-bottom-color: #c0c0c0;
}

.sheet th.picked {
  background: #d2d2d2;
  border-bottom: 2px solid #217346;
  color: #1e5c3a;
}

.corner svg {
  margin-left: 19px;
}

.sheet td {
  height: 28px;
  padding: 0 3px;
  border-right: 1px solid #d4d4d4;
  border-bottom: 1px solid #d4d4d4;
  line-height: 24px;
  white-space: nowrap;
  overflow: hidden;
}

.sheet td.box {
  border-color: #000;
}

.sheet td.edge {
  border-bottom-color: #000;
}

.sheet .strong {
  font-weight: 700;
}

.sheet .center {
  text-align: center;
}

.sheet .right {
  text-align: right;
}

.sheet .red {
  color: #f00;
}

.sheet .slant {
  font-style: italic;
  font-size: 20px;
}

.vscroll {
  display: flex;
  flex-direction: column;
  width: 31px;
  padding: 1px 3px 0;
}

.vscroll button, .hscroll button {
  display: flex;
  align-items: center;
  justify-content: center;
  width: 25px;
  height: 25px;
  flex: none;
  background: #fff;
  border: 1px solid #ababab;
}

.vtrack {
  flex: 1;
  padding-top: 34px;
  background: #dadada;
}

.vthumb {
  height: 26px;
  background: #fff;
  border: 1px solid #ababab;
}

/* Sheet tabs */
.sheet-bar {
  display: flex;
  align-items: flex-start;
  height: 34px;
  flex: none;
  border-bottom: 1px solid #c6c6c6;
}

.sheet-nav {
  display: flex;
  gap: 28px;
  width: 118px;
  padding: 10px 0 0 29px;
}

.sheet-tab {
  width: 127px;
  height: 30px;
  background: #fff;
  border-right: 1px solid #999;
  border-left: 1px solid #999;
  border-bottom: 2px solid #217346;
  color: #217346;
  font-size: 19px;
  line-height: 26px;
  font-weight: 700;
}

.add {
  margin: 5px auto 0 39px;
}

.sheet-bar .dots {
  margin: 8px 17px 0 0;
}

.hscroll {
  display: flex;
  width: 724px;
  margin: 3px 29px 0 0;
}

.htrack {
  flex: 1;
  background: #dadada;
}

.hthumb {
  width: 73%;
  height: 25px;
  background: #fff;
  border: 1px solid #ababab;
}

/* Status bar */
.status {
  display: flex;
  align-items: center;
  height: 32px;
  flex: none;
  padding: 0 11px;
  background: #f3f2f1;
}

.macro {
  margin-right: auto;
}

.views {
  display: flex;
  margin-right: 8px;
}

.views button {
  display: flex;
  align-items: center;
  justify-content: center;
  width: 60px;
  height: 32px;
}

.views .on {
  background: #c8c6c4;
}

.status input {
  width: 148px;
  margin: 0 8px;
  appearance: none;
}

.status input::-webkit-slider-runnable-track {
  height: 2px;
  background: #b0aeac;
}

.status input::-webkit-slider-thumb {
  appearance: none;
  width: 8px;
  height: 17px;
  margin-top: -8px;
  background: #777;
}

.zoom-val {
  margin-left: 19px;
  font-size: 15px;
  color: #666;
}

/* Taskbar */
.taskbar {
  display: flex;
  height: 60px;
  flex: none;
  background: #0a0a0a;
  color: #fff;
}

.start {
  display: flex;
  align-items: center;
  justify-content: center;
  width: 72px;
}

.task-search {
  display: flex;
  align-items: center;
  gap: 12px;
  width: 516px;
  padding: 0 22px 0 13px;
  border-top: 1px solid #c0c0c0;
  background: #f2f2f2;
  color: #333;
  font-size: 20px;
}

.task-search input {
  flex: 1;
}

.task-search input::placeholder {
  color: #333;
  opacity: 1;
}

.apps {
  display: flex;
  gap: 2px;
  padding-left: 2px;
  margin-right: auto;
}

.apps text {
  font-family: "Open Sans", "Noto Sans", sans-serif;
}

.apps button {
  display: flex;
  align-items: center;
  justify-content: center;
  width: 73px;
}

/* light bar under a running app, with a darker end for its extra windows */
.apps .open {
  background: linear-gradient(90deg, #76b9ed 47px, #4d7ca3 47px) center bottom / 61px 3px no-repeat;
}

.apps .current {
  background: #3c3c3c;
  border-bottom: 3px solid #76b9ed;
  padding-top: 3px;
}

.tray {
  display: flex;
  align-items: center;
}

.tray button {
  position: relative;
  margin-right: 14px;
}

.tray .people {
  margin-right: 33px;
}

.lang {
  margin-right: 13px;
  font-size: 17px;
}

.clock {
  display: flex;
  flex-direction: column;
  width: 96px;
  font-size: 18px;
  line-height: 28px;
  text-align: center;
  white-space: nowrap;
}

.tray .notif {
  margin: 0 31px 0 21px;
}

.badge {
  position: absolute;
  left: 11px;
  top: 11px;
  width: 25px;
  height: 25px;
  background: #222;
  border: 1px solid #888;
  border-radius: 50%;
  font-weight: 600;
  line-height: 23px;
}

.desktop-edge {
  width: 7px;
  height: 60px;
  border-left: 1px solid #777;
}
```
FILE: script.js
```js
const columns = 'ABCDEFGHIJKLMNOPQR'.split('');

// each cell: [text, colspan, classes]
const rows = {
  59: [['d) Prepare the journal entry to record the partner withdrawals of cash.', 5, 'strong']],
  61: [['Date', 1, 'box strong center'], ['Account Title and Explanation', 5, 'box strong center'], ['Debit', 1, 'box strong center'], ['Credit', 1, 'box strong center']],
  62: [['Jan-20', 1, 'box red center'], ['Amy, Withdrawls', 5, 'box red'], ['15,000', 1, 'box red right'], ['', 1, 'box']],
  63: [['', 1, 'box'], ['Razul, Withdrawls', 5, 'box red'], ['20,000', 1, 'box red right'], ['', 1, 'box']],
  64: [['', 1, 'box'], ['Cash', 5, 'box red'], ['', 1, 'box'], ['35,000', 1, 'box red right']],
  65: [['', 1, 'box'], ['To record partners withdrawls during the year', 5, 'box red slant'], ['', 1, 'box'], ['', 1, 'box']],
  70: [['e) Prepare a schedule showing the allocation of the net income to the partners.', 6, 'strong']],
  72: [['', 4, 'box'], ['Total', 1, 'box strong center'], ['Razul', 1, 'box strong center'], ['Amy', 1, 'box strong center'], ['Sheila', 1, 'box strong center']],
  81: [['', 4, '']]
};

for (let n = 66; n <= 68; n++) {
  rows[n] = [['', 1, 'box'], ['', 5, 'box'], ['', 1, 'box'], ['', 1, 'box']];
}
for (let n = 73; n <= 80; n++) {
  rows[n] = [['', 4, 'box'], ['', 1, 'box'], ['', 1, 'box'], ['', 1, 'box'], ['', 1, 'box']];
}

const sheet = document.getElementById('sheet');

const corner = '<th class="corner"><svg width="20" height="20" viewBox="0 0 20 20"><path d="M20 0v20H0z" fill="#b4b4b4"/></svg></th>';
sheet.tHead.innerHTML = '<tr>' + corner + columns.map(c =>
  `<th${c === 'A' ? ' class="picked"' : ''}>${c}</th>`).join('') + '</tr>';

let html = '';
for (let n = 59; n <= 81; n++) {
  html += `<tr><th>${n}</th>`;
  let used = 0;
  for (const [text, span, cls] of rows[n] || []) {
    html += `<td colspan="${span}" class="${cls}">${text}</td>`;
    used += span;
  }
  // blank cells up to column R, with a dark bottom edge above each boxed table
  for (; used < columns.length; used++) {
    const edge = (n === 60 || n === 71) && used < 8;
    html += edge ? '<td class="edge"></td>' : '<td></td>';
  }
  html += '</tr>';
}
sheet.tBodies[0].innerHTML = html;
```
